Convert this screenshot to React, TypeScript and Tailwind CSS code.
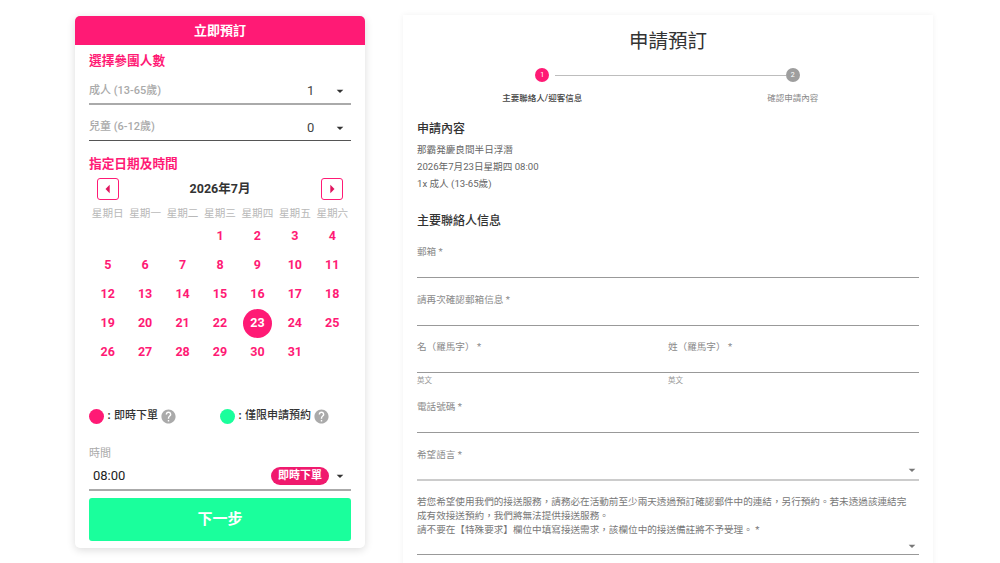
import React from "react";
import { MdArrowDropDown, MdArrowLeft, MdArrowRight, MdHelp } from "react-icons/md";

const font = "font-['Roboto','Noto_Sans_CJK_TC',sans-serif]";
const weeks = ["星期日", "星期一", "星期二", "星期三", "星期四", "星期五", "星期六"];
const days: (number | null)[] = [null, null, null, ...Array.from({ length: 31 }, (_, i) => i + 1)];

function Sel({ label, value, line, mt }: { label: string; value: string; line: string; mt: string }) {
  return (
    <div className={`flex items-center h-[29px] pt-[3px] ${mt} ${line}`}>
      <span className="text-[11px] text-[#aaaaaa] font-medium flex-1">{label}</span>
      <span className="text-[13px] text-[#444] w-[25px]">{value}</span>
      <MdArrowDropDown className="text-[#333] mr-[3px]" size={16} />
    </div>
  );
}

function Field({
  label,
  helper,
  drop,
  h = "h-[48px]",
  pt = "pt-[15px]",
  line = "border-b border-[#999999]",
  grow = "",
}: {
  label: string;
  helper?: string;
  drop?: boolean;
  h?: string;
  pt?: string;
  line?: string;
  grow?: string;
}) {
  return (
    <div className={grow}>
      <div className={`${h} ${pt} ${line} relative`}>
        <div className="text-[9.6px] leading-[14px] text-[#8a8a8a]">{label}</div>
        {drop && <MdArrowDropDown className="absolute right-[-1px] bottom-[1px] text-[#777]" size={16} />}
      </div>
      {helper && <div className="text-[7.5px] leading-[10px] mt-[3px] text-[#999]">{helper}</div>}
    </div>
  );
}

export default function App() {
  return (
    <div className={`${font} w-[1000px] h-[563px] overflow-hidden bg-white flex items-start pl-[75px] gap-[38px]`}>
      <div className="w-[290px] h-[532px] mt-[16px] rounded-[5px] bg-white shadow-[0_2px_8px_rgba(0,0,0,0.14)] flex flex-col">
        <div className="h-[29px] bg-[#ff1a75] rounded-t-[5px] flex items-center justify-center text-white text-[13px] font-bold">立即預訂</div>
        <div className="px-[14px] flex flex-col">
          <div className="text-[12.7px] leading-[16px] font-bold text-[#ff1a75] mt-[8px]">選擇參團人數</div>
          <Sel label="成人 (13-65歲)" value="1" line="border-b-2 border-[#aaaaaa]" mt="mt-[7px]" />
          <Sel label="兒童 (6-12歲)" value="0" line="border-b border-[#555]" mt="mt-[7px]" />
          <div className="text-[12.7px] leading-[16px] font-bold text-[#ff1a75] mt-[15px]">指定日期及時間</div>
          <div className="flex items-center justify-between mt-[6px] px-[8px]">
            <button className="w-[22px] h-[22px] rounded-[3px] border border-[#ff1a75] flex items-center justify-center text-[#e0155f]"><MdArrowLeft size={22} /></button>
            <span className="text-[12.5px] font-bold text-[#333]">2026年7月</span>
            <button className="w-[22px] h-[22px] rounded-[3px] border border-[#ff1a75] flex items-center justify-center text-[#e0155f]"><MdArrowRight size={22} /></button>
          </div>
          <div className="grid grid-cols-7 mt-[6px]">
            {weeks.map((w) => (
              <div key={w} className="text-center text-[10.6px] leading-[16px] text-[#b8b8b8] whitespace-nowrap">{w}</div>
            ))}
          </div>
          <div className="grid grid-cols-7 auto-rows-[29px]">
            {days.map((d, i) => (
              <div key={i} className="flex items-center justify-center">
                {d === 23 ? (
                  <span className="w-[29px] h-[29px] rounded-full bg-[#ff1a75] text-white text-[12.5px] font-bold flex items-center justify-center">{d}</span>
                ) : (
                  <span className="text-[12.5px] font-bold text-[#ff1a75]">{d}</span>
                )}
              </div>
            ))}
          </div>
          <div className="flex items-center mt-[41px] h-[16px] text-[11px] font-medium text-[#333]">
            <span className="w-[15px] h-[15px] rounded-full bg-[#ff1a75]" />
            <span className="w-[10px] text-center font-bold">:</span>
            <span>即時下單</span>
            <MdHelp className="text-[#aaaaaa] ml-[2px]" size={17} />
            <span className="w-[15px] h-[15px] rounded-full bg-[#1aff9c] ml-[43px]" />
            <span className="w-[10px] text-center font-bold">:</span>
            <span>僅限申請預約</span>
            <MdHelp className="text-[#aaaaaa] ml-[2px]" size={17} />
          </div>
          <div className="text-[11px] leading-[14px] text-[#aaaaaa] mt-[23px]">時間</div>
          <div className="flex items-center h-[30px] pt-[2px] border-b-2 border-[#aaaaaa] pl-[4px]">
            <span className="text-[13px] text-[#222] flex-1">08:00</span>
            <span className="h-[18px] px-[7px] rounded-full bg-[#f01a6e] text-white text-[11px] font-bold flex items-center">即時下單</span>
            <MdArrowDropDown className="text-[#333] ml-[3px] mr-[3px]" size={16} />
          </div>
          <button className="mt-[7px] h-[43px] rounded-[3px] bg-[#1aff9c] text-white text-[15px] font-bold flex items-center justify-center">下一步</button>
        </div>
      </div>

      <div className="w-[530px] h-[560px] mt-[15px] bg-white shadow-[0_0_6px_rgba(0,0,0,0.06)] px-[14px] flex flex-col text-[#222]">
        <div className="text-center text-[19.5px] leading-[26px] mt-[14px] text-[#333]">申請預訂</div>
        <div className="flex mt-[13px]">
          <div className="w-[250.5px] flex flex-col items-center">
            <div className="h-[14px] flex items-center w-full relative justify-center">
              <span className="w-[14px] h-[14px] rounded-full bg-[#ff1a75] text-white text-[7px] flex items-center justify-center">1</span>
              <span className="absolute left-[138px] right-0 h-px bg-[#bdbdbd] top-[7px]" />
            </div>
            <div className="text-[8.5px] leading-[12px] mt-[10px] font-medium text-[#444]">主要聯絡人/迎客信息</div>
          </div>
          <div className="w-[250.5px] flex flex-col items-center">
            <div className="h-[14px] flex items-center w-full relative justify-center">
              <span className="w-[14px] h-[14px] rounded-full bg-[#9e9e9e] text-white text-[7px] flex items-center justify-center">2</span>
              <span className="absolute left-0 right-[132px] h-px bg-[#bdbdbd] top-[7px]" />
            </div>
            <div className="text-[8.5px] leading-[12px] mt-[10px] text-[#888]">確認申請內容</div>
          </div>
        </div>
        <div className="text-[12px] leading-[16px] font-medium mt-[17px] text-[#333]">申請內容</div>
        <div className="text-[9.6px] leading-[17px] text-[#666] mt-[4px]">
          <div>那霸発慶良間半日浮潛</div>
          <div>2026年7月23日星期四 08:00</div>
          <div>1x 成人 (13-65歲)</div>
        </div>
        <div className="text-[12px] leading-[16px] font-medium mt-[21px] text-[#333]">主要聯絡人信息</div>
        <Field label="郵箱 *" h="h-[49px]" pt="pt-[16px]" />
        <Field label="請再次確認郵箱信息 *" />
        <div className="flex">
          <Field label="名（羅馬字） *" h="h-[47px]" pt="pt-[14px]" helper="英文" grow="flex-1" />
          <Field label="姓（羅馬字） *" h="h-[47px]" pt="pt-[14px]" helper="英文" grow="flex-1" />
        </div>
        <Field label="電話號碼 *" h="h-[47px]" pt="pt-[14px]" />
        <Field label="希望語言 *" drop line="border-b-2 border-[#cccccc]" />
        <div className="relative h-[74px] border-b border-[#999999] pt-[14px] pr-[6px] text-[9.6px] leading-[14px] text-[#777]">
          若您希望使用我們的接送服務，請務必在活動前至少兩天透過預訂確認郵件中的連結，另行預約。若未透過該連結完成有效接送預約，我們將無法提供接送服務。
          <br />
          請不要在【特殊要求】欄位中填寫接送需求，該欄位中的接送備註將不予受理。 *
          <MdArrowDropDown className="absolute right-[-1px] bottom-[0px] text-[#777]" size={16} />
        </div>
      </div>
    </div>
  );
}
